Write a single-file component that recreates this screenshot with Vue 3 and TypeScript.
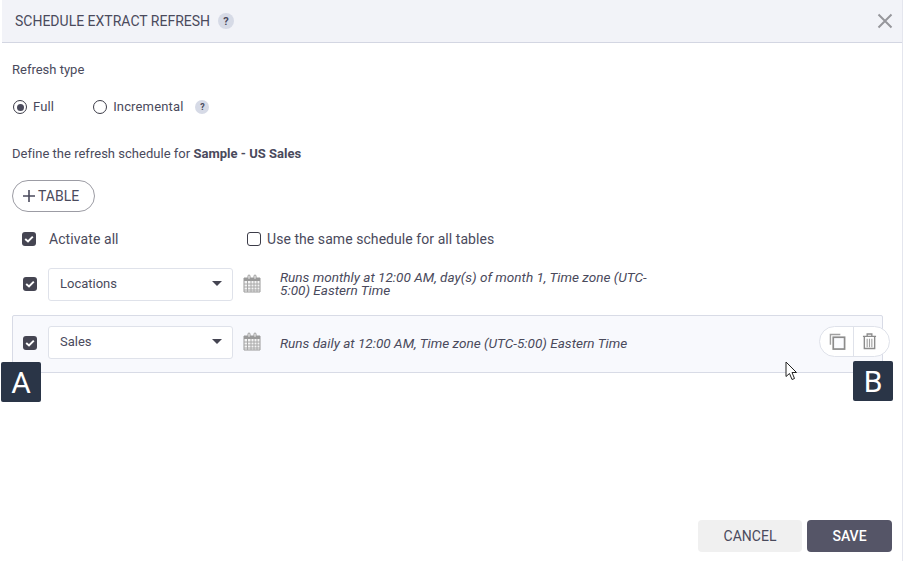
<script setup lang="ts">
interface Row { name: string; text: string; hovered: boolean }
const rows: Row[] = [
  { name: 'Locations', text: 'Runs monthly at 12:00 AM, day(s) of month 1, Time zone (UTC-5:00) Eastern Time', hovered: false },
  { name: 'Sales', text: 'Runs daily at 12:00 AM, Time zone (UTC-5:00) Eastern Time', hovered: true },
]
</script>

<template>
  <div class="dialog">
    <header class="head">
      <span class="title">SCHEDULE EXTRACT REFRESH</span>
      <span class="help big">?</span>
      <svg class="close" width="16" height="16" viewBox="0 0 16 16"><path d="M1.500 1.500 L14.500 14.500 M14.500 1.500 L1.500 14.500" stroke="#96969c" stroke-width="2" fill="none"/></svg>
    </header>
    <main class="body">
      <div class="label">Refresh type</div>
      <div class="radios">
        <span class="radio on"><i></i></span><span class="rtext">Full</span>
        <span class="radio second"></span><span class="rtext">Incremental</span>
        <span class="help small">?</span>
      </div>
      <div class="define">Define the refresh schedule for <b>Sample - US Sales</b></div>
      <button class="add"><svg width="14" height="14" viewBox="0 0 14 14"><path d="M7 1 V13 M1 7 H13" stroke="#4a4a5c" stroke-width="1.6"/></svg><span>TABLE</span></button>
      <div class="allrow">
        <span class="check"><svg width="10" height="8" viewBox="0 0 10 8"><path d="M1.2 4 L4 6.4 L8.8 1.6" stroke="#fff" stroke-width="2" fill="none"/></svg></span>
        <span class="activate">Activate all</span>
        <span class="box"></span>
        <span class="same">Use the same schedule for all tables</span>
      </div>
      <div v-for="r in rows" :key="r.name" class="row" :class="{ hovered: r.hovered }">
        <span class="check"><svg width="10" height="8" viewBox="0 0 10 8"><path d="M1.2 4 L4 6.4 L8.8 1.6" stroke="#fff" stroke-width="2" fill="none"/></svg></span>
        <div class="select"><span>{{ r.name }}</span><i class="caret"></i></div>
        <svg class="cal" width="18" height="19" viewBox="0 0 18 19">
          <path d="M1 4 H17 V18 H1 Z" fill="#f4f4f4" stroke="#9a9a9a"/>
          <path d="M1 4 H17 V7 H1 Z" fill="#9a9a9a"/>
          <path d="M1 10 H17 M1 13 H17 M1 16 H17 M4.500 7 V18 M8 7 V18 M11 7 V18 M14 7 V18" stroke="#a8a8a8" stroke-width="1"/>
          <path d="M5 4.500 V2 A1 1 0 0 1 7 2 V4.500 M11 4.500 V2 A1 1 0 0 1 13 2 V4.500" fill="#fff" stroke="#9a9a9a"/>
        </svg>
        <div class="sched">{{ r.text }}</div>
        <div v-if="r.hovered" class="actions">
          <span class="act">
            <svg width="17" height="17" viewBox="0 0 18 18"><path d="M1.500 12.500 V1.500 H12" fill="none" stroke="#a0a0a0" stroke-width="1.500"/><rect x="4.500" y="4.500" width="12" height="12.500" fill="#fbfcff" stroke="#8c8c8c" stroke-width="1.800"/></svg>
          </span>
          <span class="act last">
            <svg width="15" height="17" viewBox="0 0 16 18"><path d="M1 3.500 H15 M5.500 3 V1 H10.500 V3" fill="none" stroke="#8c8c8c" stroke-width="1.400"/><path d="M2.500 4 V16.500 H13.500 V4" fill="none" stroke="#8c8c8c" stroke-width="1.500"/><path d="M5.500 6 V15 M8 6 V15 M10.500 6 V15" stroke="#a0a0a0" stroke-width="1.200"/></svg>
          </span>
        </div>
      </div>
    </main>
    <footer class="foot">
      <button class="btn cancel">CANCEL</button>
      <button class="btn save">SAVE</button>
    </footer>
    <span class="tag a">A</span>
    <span class="tag b">B</span>
    <svg class="cursor" width="13" height="20" viewBox="0 0 13 20"><path d="M1 1 V15.500 L4.500 12.500 L7 18.500 L9.500 17.500 L7 11.500 L11.500 11.500 Z" fill="#fff" stroke="#222" stroke-width="1"/></svg>
  </div>
</template>

<style scoped>
.dialog {
  position: relative;
  width: 903px;
  height: 561px;
  box-sizing: border-box;
  padding-left: 2px;
  border-right: 1px solid #e4e6ee;
  background: #fff;
  font-family: Roboto, "Liberation Sans", sans-serif;
  color: #4a4a5c;
  display: flex;
  flex-direction: column;
  overflow: hidden;
}
.head {
  height: 43px;
  box-sizing: border-box;
  flex: none;
  background: #f2f3f8;
  border-bottom: 1px solid #d3d6e2;
  display: flex;
  align-items: center;
  padding: 0 9px 0 13px;
}
.title { font-size: 14px; color: #4a4a5c; }
.help {
  border-radius: 50%;
  background: #d6dae6;
  color: #4a4a5c;
  font-weight: 700;
  display: inline-flex;
  align-items: center;
  justify-content: center;
}
.help.big { width: 16px; height: 16px; font-size: 11px; margin-left: 8px; }
.help.small { width: 14px; height: 14px; font-size: 9px; margin-left: 12px; }
.close { margin-left: auto; margin-top: -1px; }
.body {
  flex: 1;
  padding: 19px 10px 0 10px;
  font-size: 13px;
}
.label { height: 15px; line-height: 15px; font-size: 13px; }
.radios {
  display: flex;
  align-items: center;
  height: 16px;
  margin-top: 22px;
  padding-left: 1px;
}
.radio {
  width: 12px;
  height: 12px;
  border: 1px solid #3c3c48;
  border-radius: 50%;
  display: inline-flex;
  align-items: center;
  justify-content: center;
  margin-right: 6px;
  flex: none;
}
.radio.second { margin-left: 39px; }
.radio i { width: 7px; height: 7px; border-radius: 50%; background: #4a4a5c; }
.rtext { font-size: 13px; letter-spacing: 0.15px; margin-top: -2px; }
.define { margin-top: 31px; height: 15px; line-height: 15px; font-size: 13px; letter-spacing: 0.02px; }
.define b { font-weight: 700; }
.add {
  margin-top: 19px;
  width: 83px;
  height: 32px;
  box-sizing: border-box;
  border: 1px solid #9c9ca4;
  border-radius: 16px;
  background: #fff;
  display: flex;
  align-items: center;
  padding: 0 0 0 9px;
  gap: 2px;
  font: 14px Roboto, sans-serif;
  color: #4a4a5c;
}
.allrow {
  display: flex;
  align-items: center;
  height: 20px;
  margin-top: 17px;
  padding-left: 10px;
}
.check {
  width: 14px;
  height: 14px;
  border-radius: 3px;
  background: #454552;
  display: inline-flex;
  align-items: center;
  justify-content: center;
  flex: none;
}
.activate { font-size: 14px; margin-left: 13px; width: 198px; flex: none; letter-spacing: 0.08px; }
.box {
  width: 12px;
  height: 12px;
  border: 1px solid #3c3c48;
  border-radius: 3px;
  flex: none;
}
.same { font-size: 14px; margin-left: 6px; letter-spacing: 0.06px; }
.row {
  position: relative;
  display: flex;
  align-items: center;
  height: 50px;
  box-sizing: border-box;
  padding-left: 11px;
  width: 871px;
  margin: 10px 0 6px;
}
.row.hovered {
  height: 58px;
  background: #f8f9fd;
  border: 1px solid #d8dbe6;
  border-radius: 2px;
  margin: 0;
  padding: 0 0 2px 10px;
}
.select {
  margin-left: 11px;
  width: 185px;
  height: 33px;
  box-sizing: border-box;
  border: 1px solid #dfe2ea;
  border-radius: 3px;
  background: #fff;
  display: flex;
  align-items: center;
  padding: 0 10px 2px 11px;
  font-size: 13px;
  flex: none;
}
.row.hovered .select { margin-top: -1px; }
.caret {
  margin-left: auto;
  width: 0;
  height: 0;
  border-left: 5px solid transparent;
  border-right: 5px solid transparent;
  border-top: 5px solid #454552;
}
.cal { margin: -2px 0 0 10px; flex: none; }
.row.hovered .cal { margin-top: -3px; }
.sched {
  margin-left: 19px;
  width: 370px;
  font-size: 13.55px;
  line-height: 13px;
  font-style: italic;
}
.row.hovered .sched { width: 500px; }
.actions {
  position: absolute;
  right: -8px;
  top: 10px;
  height: 31px;
  width: 71px;
  box-sizing: border-box;
  display: flex;
  border: 1px solid #dfe2ea;
  border-radius: 15.500px;
  background: #fff;
}
.act {
  width: 33px;
  display: flex;
  align-items: center;
  justify-content: center;
  flex: none;
  padding-left: 2px;
  box-sizing: border-box;
}
.act.last { width: 35px; border-left: 1px solid #dfe2ea; padding: 0 4px 0 0; }
.foot {
  flex: none;
  display: flex;
  justify-content: flex-end;
  gap: 5px;
  padding: 0 10px 9px 0;
}
.btn {
  height: 32px;
  border: none;
  border-radius: 4px;
  font: 14px Roboto, sans-serif;
}
.cancel { width: 104px; background: #f0f0f0; color: #4a4a5c; }
.save { width: 85px; background: #555567; color: #fff; font-weight: 500; }
.tag {
  position: absolute;
  width: 40px;
  height: 40px;
  background: #2a3547;
  border-radius: 2px;
  color: #fff;
  font-size: 30px;
  display: flex;
  align-items: center;
  justify-content: center;
}
.tag.a { left: 1px; top: 362px; }
.tag.b { left: 853px; top: 361px; }
.cursor { position: absolute; left: 785px; top: 361px; }
</style>
